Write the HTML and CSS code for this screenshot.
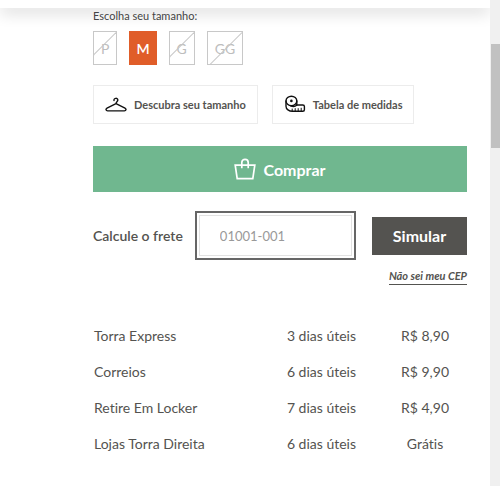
FILE: index.html
```html
<!DOCTYPE html>
<html lang="pt-BR">
<head>
<meta charset="utf-8">
<title>Produto</title>
<link rel="stylesheet" href="styles.css">
</head>
<body>
<div class="page">
  <header class="topbar"></header>
  <main class="product">
    <p class="sizes-title" id="sizes-title">Escolha seu tamanho:</p>
    <div class="sizes" role="group" aria-labelledby="sizes-title">
      <button class="size sold-out" type="button" disabled>P</button>
      <button class="size selected" type="button" aria-pressed="true">M</button>
      <button class="size sold-out" type="button" disabled>G</button>
      <button class="size sold-out" type="button" disabled>GG</button>
    </div>
    <div class="guides">
      <button class="guide" type="button">
        <svg class="guide-icon" viewBox="0 0 22 20" fill="none" stroke="#111" stroke-width="1.4" stroke-linecap="round" stroke-linejoin="round" aria-hidden="true">
          <path d="M9 5.5C8.6 2.6 13 2.7 12.8 5.2C12.6 6.7 11 6.8 11 8.6M11 8.6L2 13.2C0.3 14.2 1 15.9 2.6 15.9H19.4C21 15.9 21.7 14.2 20 13.2Z"/>
        </svg>
        Descubra seu tamanho
      </button>
      <button class="guide" type="button">
        <svg class="guide-icon" viewBox="0 0 22 20" fill="none" stroke="#111" stroke-width="1.4" stroke-linecap="round" stroke-linejoin="round" aria-hidden="true">
          <path d="M2 6V11.2C2 14.2 5 16.3 8.5 16.3H18.8C19.9 16.3 20.4 15.8 20.4 14.8V11.6C20.4 10.5 19.9 10 18.8 10H12.4"/>
          <ellipse cx="7.4" cy="5.9" rx="5.4" ry="4.7"/>
          <path d="M12.8 6V10.2C11.2 11.6 8.5 11.7 6.5 10.8"/>
          <path d="M8.2 14V16M11.2 13.6V16M14.2 13.6V16M17.2 13.2V16" stroke-width="1"/>
          <circle cx="7.4" cy="5.9" r="0.6" fill="#111"/>
        </svg>
        Tabela de medidas
      </button>
    </div>
    <button class="buy" type="button">
      <svg class="bag" viewBox="0 0 22 22" fill="none" stroke="#fff" stroke-width="1.7" aria-hidden="true">
        <path d="M1.2 7.2H20.8L18.8 20.6H3.2ZM7.8 10.2V4.5C7.8 0.2 14.2 0.2 14.2 4.5V10.2"/>
      </svg>
      Comprar
    </button>
    <form class="shipping">
      <label class="shipping-label" for="cep">Calcule o frete</label>
      <input class="cep" id="cep" type="text" placeholder="01001-001">
      <button class="simulate" type="button">Simular</button>
    </form>
    <div class="help"><a class="help-link" href="#">Não sei meu CEP</a></div>
    <table class="rates">
      <tbody>
        <tr><td class="carrier">Torra Express</td><td class="days">3 dias úteis</td><td class="price">R$ 8,90</td></tr>
        <tr><td class="carrier">Correios</td><td class="days">6 dias úteis</td><td class="price">R$ 9,90</td></tr>
        <tr><td class="carrier">Retire Em Locker</td><td class="days">7 dias úteis</td><td class="price">R$ 4,90</td></tr>
        <tr><td class="carrier">Lojas Torra Direita</td><td class="days">6 dias úteis</td><td class="price">Grátis</td></tr>
      </tbody>
    </table>
  </main>
</div>
<div class="scroll-track" aria-hidden="true"><div class="scroll-thumb"></div></div>
</body>
</html>
```
FILE: styles.css
```css
* {
  box-sizing: border-box;
}

body {
  margin: 0;
  min-height: 100vh;
  display: flex;
  background: #fff;
  color: #545350;
  font-family: Lato, "Liberation Sans", sans-serif;
  font-size: 14px;
  font-variant-ligatures: none;
}

button,
input {
  font: inherit;
  color: inherit;
  margin: 0;
}

.page {
  flex: 1;
  min-width: 0;
  overflow: hidden;
}

.topbar {
  height: 8px;
  background: #fff;
  box-shadow: 0 4px 16px rgba(0, 0, 0, 0.2);
}

.product {
  padding: 0 23px 0 93px;
}

.sizes-title {
  margin: 0;
  font-size: 11px;
  line-height: 16px;
  color: #444;
}

.sizes {
  display: flex;
  gap: 12px;
  margin-top: 7px;
}

.size {
  position: relative;
  height: 34px;
  padding: 0 7px;
  border: 1px solid #c8c8c8;
  background: #fff;
  font-size: 14px;
  overflow: hidden;
}

.sold-out {
  color: #bdbdbd;
}

.sold-out::after {
  content: "";
  position: absolute;
  top: 0;
  right: 0;
  width: 60px;
  height: 1px;
  background: #c8c8c8;
  transform: rotate(-45deg);
  transform-origin: right center;
}

.selected {
  padding: 0 6px;
  border-color: #e05d29;
  background: #e05d29;
  color: #fff;
  font-weight: 600;
}

.guides {
  display: flex;
  gap: 14px;
  margin-top: 20px;
}

.guide {
  display: flex;
  align-items: center;
  gap: 7px;
  height: 39px;
  padding: 0 11px;
  border: 1px solid #ececec;
  background: #fff;
  font-size: 11px;
  font-weight: 700;
  white-space: nowrap;
}

.guide-icon {
  width: 22px;
  height: 20px;
}

.buy {
  display: flex;
  align-items: center;
  justify-content: center;
  gap: 7px;
  width: 100%;
  height: 46px;
  margin-top: 22px;
  border: 0;
  background: #70b78f;
  color: #fff;
  font-size: 16px;
  font-weight: 700;
}

.bag {
  width: 22px;
  height: 22px;
}

.shipping {
  display: flex;
  align-items: center;
  margin-top: 23px;
}

.shipping-label {
  margin-right: 16px;
  font-weight: 600;
}

.cep {
  flex: 1;
  min-width: 0;
  height: 41px;
  padding: 0 20px;
  border: 1px solid #e2e2e2;
  outline: 2px solid #666;
  outline-offset: 2px;
  background: #fff;
  font-size: 13px;
}

.cep::placeholder {
  color: #999;
}

.simulate {
  width: 95px;
  height: 38px;
  margin-left: 20px;
  border: 0;
  background: #545350;
  color: #fff;
  font-size: 16px;
  font-weight: 700;
}

.help {
  display: flex;
  justify-content: flex-end;
  margin-top: 12px;
}

.help-link {
  border-bottom: 1px solid #545350;
  color: #545350;
  font-size: 11px;
  font-style: italic;
  font-weight: 700;
  line-height: 16px;
  text-decoration: none;
}

.rates {
  width: 100%;
  margin-top: 32px;
  border-collapse: collapse;
}

.rates td {
  height: 36px;
  padding: 0 1px;
}

.carrier {
  text-align: left;
}

.rates .days {
  width: 106px;
  padding-right: 27px;
  text-align: right;
}

.price {
  width: 84px;
  text-align: center;
}

.scroll-track {
  width: 10px;
  padding: 44px 0 0 1px;
  background: #f0f0f0;
}

.scroll-thumb {
  height: 104px;
  background: #c1c1c1;
}
```
